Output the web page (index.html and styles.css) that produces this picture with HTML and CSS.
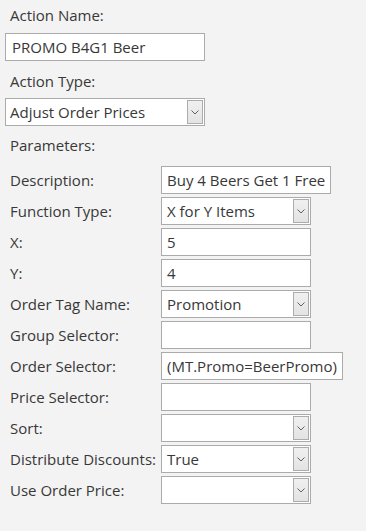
FILE: index.html
```html
<!DOCTYPE html>
<html lang="en">
<head>
  <meta charset="UTF-8">
  <title>Action Editor</title>
  <link rel="stylesheet" href="styles.css">
</head>
<body>
  <div class="editor">
    <div class="caption first">Action Name:</div>
    <div class="field wide">PROMO B4G1 Beer</div>

    <div class="caption second">Action Type:</div>
    <div class="field wide combo">
      <span>Adjust Order Prices</span>
      <span class="drop"><svg width="8" height="5" viewBox="0 0 8 5"><path d="M0.5 0.5 L4 4 L7.5 0.5" fill="none" stroke="#606060" stroke-width="1"/></svg></span>
    </div>

    <div class="caption third">Parameters:</div>

    <div class="params">
      <div class="label">Description:</div>
      <div><div class="field grow">Buy 4 Beers Get 1 Free</div></div>

      <div class="label">Function Type:</div>
      <div><div class="field combo"><span>X for Y Items</span><span class="drop"><svg width="8" height="5" viewBox="0 0 8 5"><path d="M0.5 0.5 L4 4 L7.5 0.5" fill="none" stroke="#606060" stroke-width="1"/></svg></span></div></div>

      <div class="label">X:</div>
      <div><div class="field">5</div></div>

      <div class="label">Y:</div>
      <div><div class="field">4</div></div>

      <div class="label">Order Tag Name:</div>
      <div><div class="field combo"><span>Promotion</span><span class="drop"><svg width="8" height="5" viewBox="0 0 8 5"><path d="M0.5 0.5 L4 4 L7.5 0.5" fill="none" stroke="#606060" stroke-width="1"/></svg></span></div></div>

      <div class="label">Group Selector:</div>
      <div><div class="field"></div></div>

      <div class="label">Order Selector:</div>
      <div><div class="field grow">(MT.Promo=BeerPromo)</div></div>

      <div class="label">Price Selector:</div>
      <div><div class="field"></div></div>

      <div class="label">Sort:</div>
      <div><div class="field combo"><span></span><span class="drop"><svg width="8" height="5" viewBox="0 0 8 5"><path d="M0.5 0.5 L4 4 L7.5 0.5" fill="none" stroke="#606060" stroke-width="1"/></svg></span></div></div>

      <div class="label">Distribute Discounts:</div>
      <div><div class="field combo"><span>True</span><span class="drop"><svg width="8" height="5" viewBox="0 0 8 5"><path d="M0.5 0.5 L4 4 L7.5 0.5" fill="none" stroke="#606060" stroke-width="1"/></svg></span></div></div>

      <div class="label">Use Order Price:</div>
      <div><div class="field combo"><span></span><span class="drop"><svg width="8" height="5" viewBox="0 0 8 5"><path d="M0.5 0.5 L4 4 L7.5 0.5" fill="none" stroke="#606060" stroke-width="1"/></svg></span></div></div>
    </div>
  </div>
</body>
</html>
```

FILE: styles.css
```css
body {
  margin: 0;
  background: #f3f3f3;
  font-family: "Open Sans", "Noto Sans", sans-serif;
  font-size: 15px;
  color: #383838;
}

.editor {
  padding-left: 5px;
  width: 361px;
  height: 531px;
}

.caption {
  padding-left: 5px;
  line-height: 20px;
}

.caption.first {
  padding-top: 5px;
  margin-bottom: 8px;
}

.caption.second {
  margin-top: 10px;
  margin-bottom: 7px;
}

.caption.third {
  margin-top: 9px;
  margin-bottom: 11px;
}

.field {
  box-sizing: border-box;
  display: flex;
  align-items: center;
  width: 150px;
  height: 28px;
  padding: 0 5px;
  background: #fff;
  border: 1px solid #ababab;
  line-height: 20px;
  white-space: nowrap;
}

.field.wide {
  width: 200px;
  padding-left: 6px;
}

.field.wide.combo {
  padding-left: 4px;
}

.field.grow {
  display: inline-flex;
  width: auto;
  min-width: 150px;
}

.combo {
  justify-content: space-between;
  padding-right: 1px;
}

.drop {
  box-sizing: border-box;
  display: flex;
  align-items: center;
  justify-content: center;
  width: 16px;
  height: 24px;
  border: 1px solid #acacac;
  background: linear-gradient(#f0f0f0, #e3e3e3);
}

.params {
  display: grid;
  grid-template-columns: 151px auto;
  row-gap: 3px;
  padding-left: 5px;
}

.label {
  display: flex;
  align-items: center;
  height: 28px;
  white-space: nowrap;
}
```
